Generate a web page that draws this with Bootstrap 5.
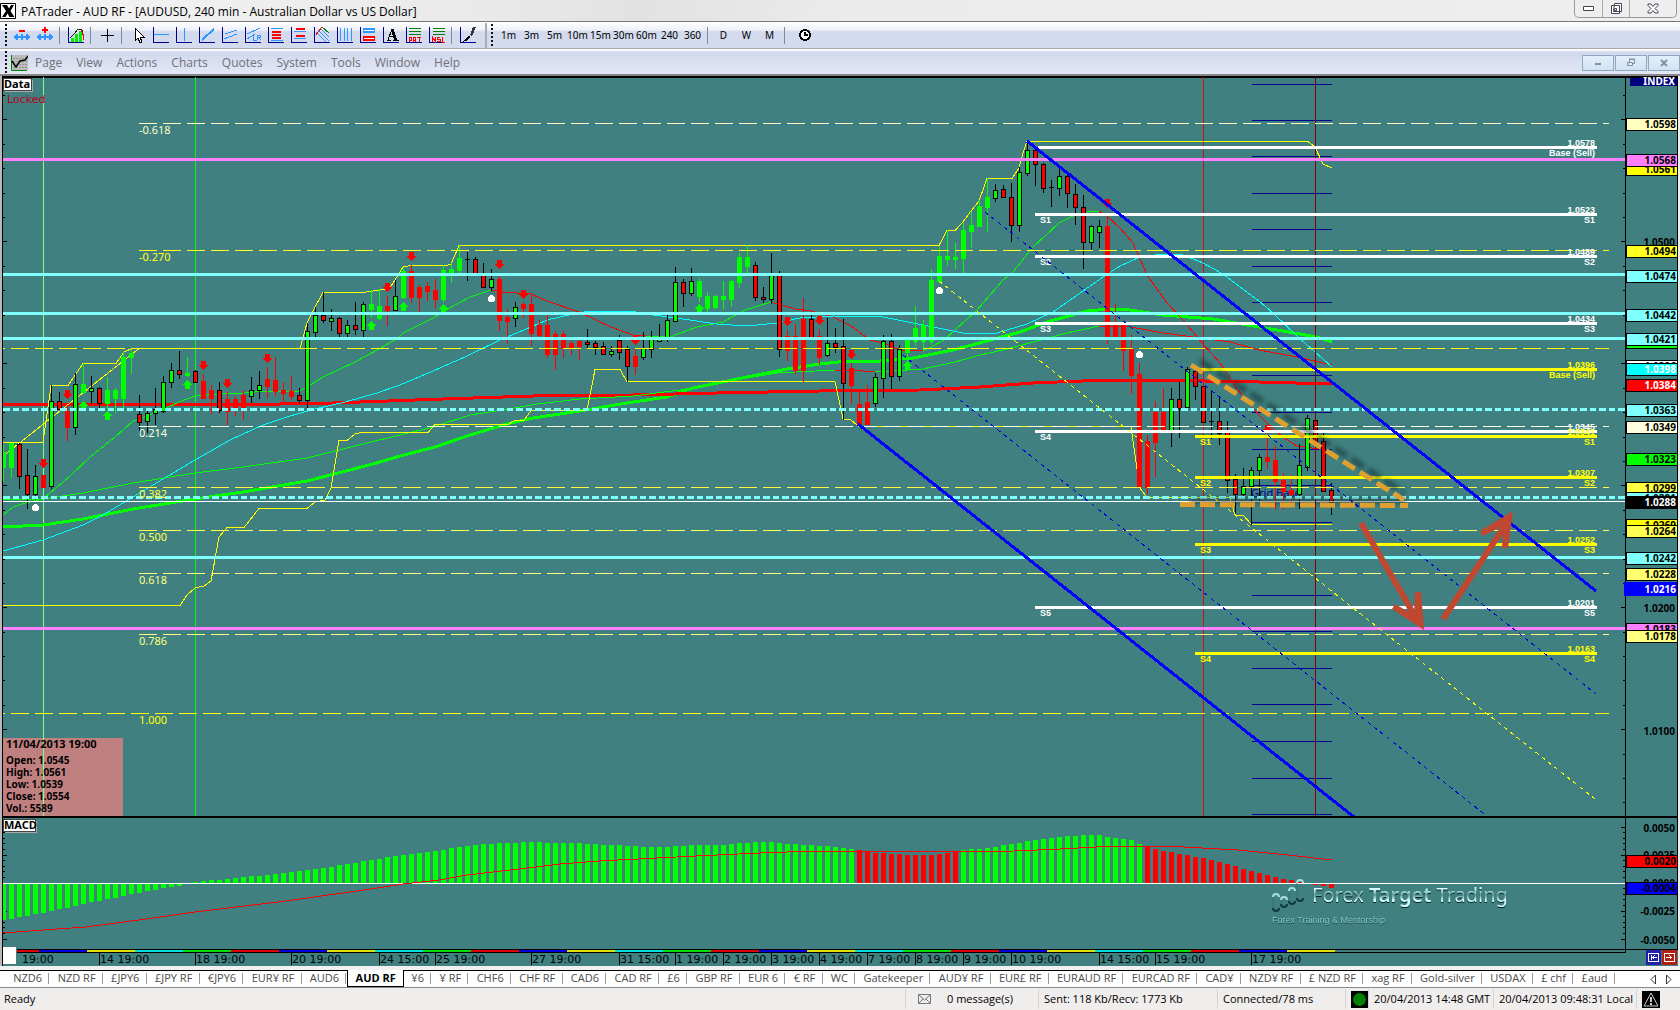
<!DOCTYPE html>
<html lang="en">
<head>
<meta charset="utf-8">
<meta name="viewport" content="width=device-width, initial-scale=1">
<title>PATrader - AUD RF</title>
<link href="https://cdn.jsdelivr.net/npm/bootstrap@5.3.0/dist/css/bootstrap.min.css" rel="stylesheet">
<style>
:root{--ui:"Open Sans","Noto Sans",sans-serif;--num:"Noto Sans","Open Sans",sans-serif;--wide:"DejaVu Sans",sans-serif}
body{font-family:var(--ui);font-size:11px;line-height:16px;color:#000;background:#f0eeee}
button{background:none;border:0;padding:0;color:inherit;font:inherit}
.title-strip{height:22px;background:linear-gradient(100deg,#f4f4f4,#e9e9e9 30%,#e2e2e2 38%,#ebebeb 50%,#eee);border-bottom:1px solid #777;font-size:12px}
.app-mark{margin:3px 5px 0 0}
.tool-strip{height:27px;background:linear-gradient(#fff,#eef1f9 30%,#d3daed 38%,#d4dbee);border-bottom:1px solid #aaa}
.menu-strip{height:27px;padding-top:2px;background:linear-gradient(#fff 1px,#d2d9ed 3px,#e3e7f6);border-bottom:2px solid #85858a;color:#707078;font-size:12px}
.grip{width:2px;height:23px;margin:0 3px 0 5px;background:repeating-linear-gradient(#111 0 2px,transparent 2px 4px)}
.tool{width:23px;height:23px;display:flex;align-items:center;justify-content:center}
.tool svg{width:18px;height:18px;shape-rendering:crispEdges}
.divide{width:8px;height:17px;background:linear-gradient(#84889a,#84889a) 3px 0/1px 100% no-repeat}
.bar-end{width:2px;height:25px;background:#aab;margin-left:6px}
.frames{font-family:var(--num);font-size:10px}
.menu-strip .entry{padding:0 7px}
.win-keys{height:18px;border:1px solid #999;border-top:0;border-radius:0 0 5px 5px;margin-right:3px}
.win-keys button{width:27px;height:17px;display:flex;align-items:center;justify-content:center}
.win-keys button+button{border-left:1px solid #aaa}
.win-keys button:last-child{width:47px}
.mdi{width:32px;height:16px;border:1px solid #8fa9bf;background:linear-gradient(#e3f0fb,#d2e2f2);display:flex;align-items:center;justify-content:center;margin-right:1px}
.chart{display:block;width:100%;height:auto}
.tab-strip{height:22px;background:#fff;border-top:4px solid #f1f1f1;box-shadow:inset 0 1px #000;border-bottom:1px solid #888;color:#4c4c4c}
.tab-list{max-width:1616px;padding-left:6px}
.sheet{flex:1 1 auto;height:16px;line-height:16px;white-space:nowrap;text-align:center;border-right:1px solid transparent;background:linear-gradient(#999,#999) right 3px/1px 11px no-repeat}
.sheet.current{font-weight:700;color:#000;border:1px solid #000;border-top:0;background:#fff;height:17px}
.state{height:22px;background:#f0eded;font-size:11px}
.cell{border-left:1px solid #d5d2d2;height:20px;line-height:20px;padding-left:5px;white-space:nowrap}
.c-msg{width:133px}.c-net{width:179px}.c-link{width:128px}.c-time{width:125px}.c-local{width:143px}.c-alert{padding-right:20px}
text{white-space:pre}
.t-fib{font:11px var(--num)}
.t-price{font:700 10px var(--num);text-anchor:end}
.t-lvl{font:700 9px "Liberation Sans",sans-serif}
.t-time{font:11px var(--wide)}
.t-info{font:700 10px var(--num)}
.t-head{font:700 11px var(--num)}
.t-mark{font:20px var(--num);fill:url(#steel);filter:drop-shadow(0 1px 0 #042426)}
.t-sub{font:9px "Liberation Sans",sans-serif;fill:#8ac4c4;filter:drop-shadow(0 1px 0 #174a4c)}
</style>
<script src="https://cdn.jsdelivr.net/npm/bootstrap@5.3.0/dist/js/bootstrap.bundle.min.js"></script>
</head>
<body class="m-0">
<header>
  <div class="title-strip d-flex align-items-start">
    <svg class="app-mark flex-shrink-0" width="16" height="16" viewBox="0 0 16 16"><path d="M.5.5h15v15H.5z" fill="#fff" stroke="#000"/><path d="M2 2h5l2 3.500 2-3.500h3l-3.500 6 4 6H9.500L7.500 10.500 5.500 14H2l4-6z" fill="#000"/></svg>
    <span class="mt-1 lh-sm">PATrader - AUD RF - [AUDUSD, 240 min - Australian Dollar vs US Dollar]</span>
    <div class="win-keys d-flex ms-auto">
      <button aria-label="Minimize"><svg width="13" height="6"><path d="M1.500.5h10v4h-10z" fill="#fff" stroke="#445"/></svg></button>
      <button aria-label="Restore"><svg width="13" height="13" fill="#fff" stroke="#445"><path d="M4.500 1.500h7v8h-8zM1.500 3.500h8v8h-8z"/><path d="M4.500 6.500h2v2h-2z"/></svg></button>
      <button aria-label="Close"><svg width="12" height="11"><path d="M1 1h3l2 2.500L8 1h3v1.500L8 5.500l3 3V10H8L6 7.500 4 10H1V8.500l3-3-3-3z" fill="#fff" stroke="#445"/></svg></button>
    </div>
  </div>
  <div class="tool-strip d-flex align-items-center">
    <span class="grip"></span>
    <div class="d-flex align-items-center" id="tools"></div>
    <span class="bar-end"></span><span class="grip ms-1 me-1"></span>
    <div class="frames d-flex align-items-center" id="frames"></div>
  </div>
  <nav class="menu-strip d-flex align-items-center">
    <span class="grip me-0"></span>
    <svg class="ms-1" width="17" height="16" viewBox="0 0 17 16"><path d="M1 0h16v15H1z" fill="#bbb"/><path d="M.5 0v15.500H16" stroke="#080" fill="none"/><path d="M3 3v12M6 3v12M9 3v12M12 3v12M15 3v12" stroke="#777" stroke-dasharray="1 2"/><path d="M1 6l4 6 4-6 5-1 3-4" stroke="#000" stroke-width="1.500" fill="none"/></svg>
    <button class="entry">Page</button><button class="entry">View</button><button class="entry">Actions</button><button class="entry">Charts</button><button class="entry">Quotes</button><button class="entry">System</button><button class="entry">Tools</button><button class="entry">Window</button><button class="entry">Help</button>
    <div class="d-flex ms-auto">
      <button class="mdi" aria-label="Minimize chart"><svg width="8" height="6"><path d="M1 3h6v2H1z" fill="#7d93a8"/></svg></button>
      <button class="mdi" aria-label="Restore chart"><svg width="10" height="9" fill="none" stroke="#7d93a8"><path d="M3.500 5V1.500h5v4H6M1.500 4.500h5v3h-5zM3 1h6"/></svg></button>
      <button class="mdi me-0" aria-label="Close chart"><svg width="8" height="8"><path d="M1 1l6 6M7 1L1 7" stroke="#7d93a8" stroke-width="2"/></svg></button>
    </div>
  </nav>
</header>
<main>
  <svg class="chart" id="chart" viewBox="0 76 1680 890" shape-rendering="crispEdges" role="img" aria-label="AUDUSD 240 minute chart">
    <defs>
      <linearGradient id="steel" x1="0" y1="0" x2="0" y2="1"><stop offset=".3" stop-color="#d4ffff"/><stop offset=".52" stop-color="#5c9a9a"/><stop offset=".7" stop-color="#d4ffff"/></linearGradient>
      <filter id="soft" x="-10%" y="-40%" width="120%" height="180%"><feGaussianBlur stdDeviation="2"/></filter>
      <clipPath id="pane"><path d="M3 77h1622v740H3z"/></clipPath>
    </defs>
  </svg>
</main>
<footer>
  <div class="tab-strip d-flex">
    <div class="tab-list d-flex flex-fill" id="tabs"></div>
    <div class="d-flex ms-auto align-items-center gap-2 px-2">
      <button aria-label="Previous" class="lh-1"><svg width="7" height="11"><path d="M5.500 1v9L1 5.500z" fill="#fff" stroke="#333"/></svg></button>
      <button aria-label="Next" class="lh-1"><svg width="7" height="11"><path d="M1.500 1v9L6 5.500z" fill="#fff" stroke="#333"/></svg></button>
    </div>
  </div>
  <div class="state d-flex align-items-center">
    <span class="ps-1 me-auto">Ready</span>
    <div class="cell c-msg d-flex align-items-center ps-2"><svg class="ms-1 me-3" width="13" height="10"><path d="M.5.5h12v9H.5z" fill="#eee" stroke="#777"/><path d="M1 1l5.500 5L12 1M1 9l4-4M12 9L8 5" fill="none" stroke="#777"/></svg><span>0 message(s)</span></div>
    <div class="cell c-net">Sent: 118 Kb/Recv: 1773 Kb</div>
    <div class="cell c-link">Connected/78 ms</div>
    <div class="cell d-flex align-items-center"><svg width="17" height="17"><path d="M0 0h17v17H0z"/><circle cx="8.500" cy="8.500" r="6.500" fill="#008000"/></svg></div>
    <div class="cell c-time">20/04/2013 14:48 GMT</div>
    <div class="cell c-local">20/04/2013 09:48:31 Local</div>
    <div class="cell c-alert d-flex align-items-center"><svg width="18" height="17"><path d="M0 0h18v17H0z"/><path d="M9 2l7 13H2z" fill="none" stroke="#ccc"/><path d="M9 6v5M9 12v2" stroke="#ccc" stroke-width="2"/></svg></div>
  </div>
</footer>
<script>
/* toolbar */
const axes='<path d="M1.500 1v15.500H17" fill="none" stroke="#00008b"/>';
const L=(d,c,w)=>`<path d="${d}" fill="none" stroke="${c}" stroke-width="${w||1}"/>`, B='#2e96ff';
const arrows='<path d="M3 8h2v2h3V8h2v2h3V8h2l2 3-2 3h-2v-2h-3v2H8v-2H5v2H3l-2-3z" fill="'+B+'"/>';
const tools=[
 ['Shrink',arrows+'<path d="M6 4h6v2H6z" fill="red"/>'],['Expand',arrows+'<path d="M8 1h2v2h2v2h-2v2H8V5H6V3h2z" fill="red"/>'],0,
 ['Chart',axes+'<path d="M4 12h3v4H4zM8 8h3v8H8zM12 5h3v11h-3z" fill="#0e0"/>'+L('M3 12l5-5 3-4 4 1 2 10','#222')+L('M14 4l2 4v6','red')],0,
 ['Crosshair',L('M9.500 3v13M3 9.500h13','#000')],0,
 ['Pointer','<path d="M6 2v13l3-3 2 5 2-1-2-5h4z" fill="#fff" stroke="#000"/>'],
 ['Horizontal line',axes+L('M2 8.500h15',B)],['Vertical line',axes+L('M9.500 2v13',B)],['Trend line',axes+L('M4 14L16 3',B,2)],
 ['Channel',axes+L('M4 8l12-4M3 13l13-5',B)],['Regression',axes+L('M3 8l13-6M3 13l8-5M9.500 9v5h3M13.500 14V9h3v2h-2l2 3',B)],
 ['Retracement',axes+L('M4 2.500h12M4 14.500h12',B)+L('M5 5.500h9M5 8.500h9M5 11.500h9','red',2)],['Extension',axes+L('M4 5.500h12M4 12.500h12',B)+L('M6 2.500h9M6 9.500h9','red',2)],
 ['Fan',axes+L('M3 6l10 10M5 4l11 11M7 2l9 9',B)+L('M9 1l7 6','green')+L('M3 9l6-8','red')],['Cycles',axes+L('M4.500 2v13M8.500 2v13M11.500 2v13M15.500 2v13',B)],
 ['Zones',axes+'<path d="M4 2h12v5H4z" fill="'+B+'"/><path d="M4 10h12v5H4z" fill="red"/>'+L('M5 4.500h10M5 12.500h10','#fff',1)],
 ['Text',axes+L('M5 14.500h4M11 14.500h6M6 14L10 3M7 10.500h5','#000',1)+L('M10 3l4 12','#000',3)],
 ['Pattern',axes+L('M4 2.500h12M4 5.500h12M4 8.500h12','green')+L('M4.500 16v-5h2v3H4M8.500 16v-5h2v5M8 14.500h2M12 11.500h4M14.500 11v5','red')],
 ['Levels',axes+L('M5 2.500h12M5 5.500h12M5 8.500h12','green')+L('M4.500 16v-5l3 5v-5M12 11.500H9.500v2h3v2H9M14.500 11v5h2','red')],0,
 ['Brush',axes+'<path d="M14 1h3l-4 9-2-1z" fill="#333"/><path d="M10 10l2 1-5 4-4 1z" fill="#000"/>']];
document.getElementById('tools').innerHTML=tools.map(t=>t?`<button class="tool" aria-label="${t[0]}"><svg viewBox="0 0 18 18">${t[1]}</svg></button>`:'<span class="divide"></span>').join('');
const clock='<button class="tool ms-1" aria-label="Clock"><svg viewBox="0 0 18 18" shape-rendering="geometricPrecision"><circle cx="9" cy="9" r="5" fill="#fff" stroke="#000" stroke-width="2"/><path d="M9 6v3h3" fill="none" stroke="#000" stroke-width="1.500"/></svg></button>';
document.getElementById('frames').innerHTML=['1m','3m','5m','10m','15m','30m','60m','240','360',0,'D','W','M',0].map(t=>t?`<button class="tool">${t}</button>`:'<span class="divide"></span>').join('')+clock;
const tabs='NZD6|NZD RF|£JPY6|£JPY RF|€JPY6|EUR¥ RF|AUD6|AUD RF|¥6|¥ RF|CHF6|CHF RF|CAD6|CAD RF|£6|GBP RF|EUR 6|€  RF|WC|Gatekeeper|AUD¥ RF|EUR£ RF|EURAUD RF|EURCAD RF|CAD¥|NZD¥ RF|£ NZD RF|xag RF|Gold-silver|USDAX|£ chf|£aud'.split('|');
document.getElementById('tabs').innerHTML=tabs.map(t=>`<button class="sheet${t==='AUD RF'?' current':''}">${t}</button>`).join('');

/* chart */
let out='';
const rect=(x,y,w,h,f,e='')=>out+=`<rect x="${x}" y="${y}" width="${w}" height="${h}" fill="${f}" ${e}/>`;
const line=(x1,y1,x2,y2,c,w=1,e='')=>out+=`<path d="M${x1} ${y1}L${x2} ${y2}" stroke="${c}" stroke-width="${w}" fill="none" ${e}/>`;
const poly=(p,c,w=1,e='')=>out+=`<polyline points="${p}" stroke="${c}" stroke-width="${w}" fill="none" ${e}/>`;
const text=(x,y,s,cls,c,e='')=>out+=`<text x="${x}" y="${y}" class="${cls}" fill="${c}" ${e}>${s}</text>`;
rect(0,76,1680,890,'#b9b9b9');rect(2,76,1676,890,'#408080');rect(1678,76,2,890,'#eee');
line(2,77,1678,77,'#000',2);line(2.5,76,2.5,966,'#000');line(1677.5,76,1677.5,950,'#000');line(1625.5,76,1625.5,953,'#000');
for(let i=0;i<30;i++){const y=Math.round(95.9+24.4*i)-.5,M=i%5===1;line(3,y,M?7:5,y,'#000');line(M?1621:1623,y,1625,y,'#000')}
for(let i=0;i<=20;i++){const y=Math.round(827.5+5.6*i)-.5,M=i%5===0;line(3,y,M?7:5,y,'#000');line(M?1621:1623,y,1625,y,'#000')}
rect(3,738,120,78,'#c08080');
out+='<g clip-path="url(#pane)">';
line(43.5,77,43.5,817,'#80ff80');line(195.5,77,195.5,817,'#0f0');line(1203.5,77,1203.5,817,'#d01010');
text(7,103,'Locked','t-time','#b80020');
['11/04/2013 19:00','Open: 1.0545','High: 1.0561','Low: 1.0539','Close: 1.0554','Vol.: 5589'].forEach((s,i)=>text(6,i?752+12*i:748,s,i?'t-info':'t-head','#000'));
[84,120,156,193,229,266,302,375,412,449,485,522,595,631,668,704,741,778,814].forEach(y=>line(1252,y+.5,1332,y+.5,'#000090'));
text(1251,497,'Grid Base','t-fib','#000090');
/* moving averages */
poly('3,527 43,525 83,519 133,509 195,499 243,492 307,481 373,464 400,456 435,447 467,436 507,424 533,418 580,411 633,402 667,397 693,388 747,377 787,369 820,364 847,361 880,361 913,358 953,350 987,341 1020,332 1047,322 1087,311 1110,309 1130,310 1163,315 1213,319 1259,327 1277,330 1317,337 1332,342','#0f0',3);
poly('3,404 280,404 333,403 443,399 533,396 633,395 717,393 820,391 920,390 980,387 1033,383 1107,380 1150,380 1259,382 1332,384','#f00',3);
poly('3,500 43,499 83,493 133,483 195,473 243,467 307,458 363,444 400,435 433,427 470,415 503,410 537,404 580,399 633,396 680,390 723,382 777,373 835,370','#0f0');
poly('835,370 851,370 875,372','#f00');poly('875,372 923,369 955,362 980,355 1003,350 1033,342 1067,333 1099,326','#0f0');poly('1099,326 1131,327 1163,333 1193,337 1230,342 1259,350 1297,357 1332,365','#f00');
poly('3,515 13,507 25,503 43,499 70,476 90,457 115,437 133,421 155,413 179,402 195,396 219,394 243,393 267,391 299,391 307,387 323,377 355,362 379,349 398,338 403,333 435,317 446,310 470,297 491,290','#0f0');
poly('491,290 503,292 531,294 547,301 579,312 611,327 633,335 646,336','#f00');poly('646,336 670,337 697,327 723,322 745,310 755,307 771,302','#0f0');
poly('771,302 795,309 811,311 833,317 851,326 870,340 883,343 900,350 923,351','#f00');
poly('923,351 931,347 944,340 977,310 1003,280 1013,272 1033,247 1059,223 1075,215 1088,212 1099,211','#0f0');
poly('1099,211 1107,216 1120,228 1133,243 1147,275 1167,303 1183,320 1203,344 1220,363 1237,389 1259,415 1267,423 1283,437 1297,446 1320,449 1332,457','#f00');
poly('3,551 43,540 83,525 103,515 133,497 163,479 195,460 230,440 263,425 290,416 315,409 345,402 377,393 400,385 433,371 467,356 500,340 531,327 547,320 573,314 590,311 630,311 653,315 683,319 717,324 747,326 777,323 800,318 833,316 883,317 923,325 963,333 997,333 1027,324 1053,312 1083,291 1103,277 1120,266 1140,257 1163,254 1183,255 1203,263 1223,274 1259,301 1273,313 1297,336 1332,367','#0ff');
/* range channel */
poly('3,442.500 43,442.500 51,385.500 68,385.500 83,363.500 116,363.500 124,352 132,348.500 300,348.500 307,323 315,307 323,292.500 363,292.500 379,290 389,289 395,280 403,267 411,265.500 447,265.500 451,264 459,245.500 939,245.500 947,230.500 955,230.500 963,222 971,211 979,201 987,178.500 1012,178.500 1019,168 1023,153 1027,141.500 1308,141.500 1315,147 1323,164 1332,168','#ff0');
poly('3,456 139,348.500','#ff0');
poly('3,605.500 180,605.500 187,595 195,588 204,586 211,581 219,537 227,527.500 244,527.500 259,508.500 307,508.500 315,502 325,500 331,488 339,440.500 347,440.500 355,434 361,432.500 428,432.500 435,424.500 508,424.500 515,420.500 524,420.500 531,410.500 587,410.500 595,369.500 620,369.500 627,381.500 835,381.500 843,419 851,420 859,426.500 1131,426.500 1137,469 1139,487 1147,497.500 1230,498 1235,515 1243,515 1251,524','#ff0');
line(1251,524.5,1332,524.5,'#ff0');
/* candles: kind high low top bottom, one step per 8px; capitals are outlined */
const C=`g445 481 452 467;g443 477 443 467;R443 488 444 476;R449 508 475 494;G465 499 476 494;r475 487 475 487;G385 488 401 486;R392 409 401 409;r405 440 411 427;G373 434 384 427;g363 393 384 392;G376 403 388 391;R387 408 388 403;g377 409 390 403;g388 412 390 398;g352 408 357 398;g348 373 353 357;R395 433 414 422;G411 432 413 421;G388 424 409 413;G376 412 382 411;G363 387 370 382;R351 378 370 374;g357 376 373 375;R370 382 371 382;r374 398 381 398;r385 413 390 398;R382 412 390 410;r392 424 399 411;r396 415 399 408;r390 419 395 408;G377 402 390 396;G371 398 385 390;r367 397 379 386;r357 395 380 391;r382 401 390 393;r376 399 391 396;R388 403 395 400;G323 408 331 400;G307 336 315 332;R292 322 315 320;G309 330 318 321;R317 337 318 333;G320 337 325 333;R302 334 325 329;G302 337 304 330;g290 317 304 309;g289 319 306 318;r296 325 306 310;G280 310 296 310;g267 298 271 297;r265 302 271 297;r285 312 287 297;r282 300 286 291;r279 307 290 299;g265 301 270 299;g263 282 269 272;g245 274 258 270;G252 280 259 260;R257 274 259 274;R263 287 275 287;G269 290 279 287;r276 330 279 320;r309 343 317 321;G302 326 307 318;r302 317 304 308;r293 345 304 333;r320 339 325 335;r315 357 325 354;r331 369 334 354;r331 357 334 348;r341 354 343 348;r339 359 341 346;R329 348 342 344;R341 354 343 347;R342 354 346 354;G346 356 351 354;R335 359 340 352;R346 381 349 366;r349 374 356 366;G332 359 348 357;G331 357 339 349;G324 341 339 341;G315 341 320 338;G267 321 282 321;R279 306 282 293;G268 295 281 293;g278 301 281 296;g292 312 296 308;g295 308 296 307;g281 308 296 299;g280 306 281 299;g253 287 257 282;g245 273 257 266;R262 300 265 297;R287 302 297 299;G253 303 275 299;R271 356 275 349;r330 360 336 350;r324 373 336 370;r298 381 319 370;R312 337 319 337;r329 364 336 357;G318 356 343 355;R328 352 343 347;R319 419 346 383;r363 403 368 385;r392 425 404 425;r385 424 402 424;G373 406 377 403;G335 397 341 378;R334 388 341 376;G345 380 349 376;g337 360 340 352;g306 345 328 341;g320 350 325 341;g269 344 280 341;g247 282 256 281;g230 265 256 259;g243 268 257 259;g222 273 230 258;g211 247 225 231;g200 226 206 226;g178 231 197 207;G184 201 190 198;R185 197 189 197;R183 241 197 225;G167 231 172 225;G142 175 150 173;R148 185 150 164;R163 192 164 188;R180 206 187 188;G169 195 176 188;R175 207 176 193;R184 224 194 207;R195 268 207 242;G225 250 226 242;G220 247 226 232;r213 343 226 337;r304 337 325 337;r321 370 325 350;r335 393 349 375;r363 487 374 487;r435 493 441 487;r401 476 412 442;r388 431 412 431;G388 446 399 431;R382 437 399 408;G367 408 369 407;R369 399 371 386;R386 422 386 422;R391 438 421 422;R398 444 421 433;R421 492 432 480;R474 515 479 494;G468 496 486 494;G467 524 470 486;G454 501 457 470;r438 468 457 461;r446 509 460 481;r473 509 480 491;r475 502 490 494;G444 508 465 494;G415 470 418 467;R420 442 420 442;R432 491 441 491;R483 514 490 502`.split(';');
C.forEach((s,i)=>{const k=s[0],[h,l,t,b]=s.slice(1).split(' ').map(Number),x=3+8*i,f=/g/i.test(k)?'#0f0':'#f00',edge=k<'a';
 line(x+.5,h,x+.5,l+1,edge?'#000':f);
 if(b-t<2)line(x-2,t+.5,x+3,t+.5,edge?'#000':f);
 else if(edge)rect(x-1.5,t+.5,4,b-t,f,'stroke="#000"');
 else rect(x-2,t,5,b-t+1,f)});
const at=i=>3.5+8*i;
[[5,463],[8,394],[25,365],[28,383],[33,358],[48,287],[51,256],[62,264],[65,294],[79,340],[98,321],[102,320],[106,354],[138,203],[158,429]].forEach(([i,y])=>out+=`<path d="M${at(i)-2.5} ${y-4}h5v4h3l-5.500 5-5.500-5h3z" fill="#f00"/>`);
[[10,406],[13,416],[23,385],[46,326],[50,307],[55,309],[87,309],[113,366]].forEach(([i,y])=>out+=`<path d="M${at(i)-2.5} ${y+4}h5v-4h3l-5.500-5-5.500 5h3z" fill="#0f0"/>`);
[[4,507],[61,298],[117,290],[142,354]].forEach(([i,y])=>out+=`<circle cx="${at(i)}" cy="${y+.5}" r="3.500" fill="#fff"/>`);
/* levels */
line(3,501.5,1625,501.5,'#fff');
line(1315.5,77,1315.5,817,'#800000');
[147,214,256,323,431,607].forEach((y,i)=>line(i?1035:1038,y+.5,1597,y+.5,'#fff',3));
[369,436,477,544,653].forEach((y,i)=>line(i?1195:1198,y+.5,1597,y+.5,'#ff0',3));
[159,628].forEach(y=>line(3,y+.5,1625,y+.5,'#ff80ff',3));
[274,313,338,557].forEach(y=>line(3,y+.5,1625,y+.5,'#80ffff',3));
[409,497].forEach(y=>line(3,y+.5,1625,y+.5,'#80ffff',3,'stroke-dasharray="7 3 6 3"'));
[[123,'#ffffc0','-0.618'],[250,'#ffff20','-0.270'],[348,'#ff0',''],[426,'#ffffe0','0.214'],[487,'#ffff40','0.382'],[530,'#ffff50','0.500'],[573,'#ffff80','0.618'],[634,'#ffff80','0.786'],[713,'#ff0','1.000']].forEach(([y,c,s])=>{
 const x=y===348||y===713?-13:139;line(x,y+.5,1609,y+.5,c,1,'stroke-dasharray="18 6"');if(s)text(139,y+11,s,'t-fib',c)});
[[147,'1.0578','Base (Sell)'],[214,'1.0523','S1'],[256,'1.0489','S2'],[323,'1.0434','S3'],[431,'1.0345',''],[607,'1.0201','S5']].forEach(([y,a,b],i)=>{text(1595,y-1,a,'t-lvl','#fff','text-anchor="end"');if(b)text(1595,y+9,b,'t-lvl','#fff','text-anchor="end"');if(i)text(1040,y+9,'S'+i,'t-lvl','#fff')});
[[369,'1.0396','Base (Sell)'],[436,'1.0341','S1'],[477,'1.0307','S2'],[544,'1.0252','S3'],[653,'1.0163','S4']].forEach(([y,a,b],i)=>{text(1595,y-1,a,'t-lvl','#ff0','text-anchor="end"');text(1595,y+9,b,'t-lvl','#ff0','text-anchor="end"');if(i)text(1200,y+9,'S'+i,'t-lvl','#ff0')});
/* trend lines */
line(1027,141,1596,591,'#00f',3);line(858,424,1354,817,'#00f',3);
line(985,212,1596,694,'#0000d8',1,'stroke-dasharray="4 4"');line(903,355,1488,817,'#0000d8',1,'stroke-dasharray="4 4"');line(939,281,1595,799,'#ff0',1,'stroke-dasharray="4 4"');
out+='<g shape-rendering="geometricPrecision"><g filter="url(#soft)" opacity=".5">';
poly('1200,361 1404,493','#102020',6,'stroke-dasharray="15 5"');rect(1190,498,215,5,'#102020');
out+='</g>';
poly('1191,365 1404,500','#e0a030',5,'stroke-dasharray="14 6"');line(1180,504.5,1408,505.5,'#e0a030',5,'stroke-dasharray="15 5"');
poly('1361,523 1420,625','#c04830',6);out+='<path d="M1392 609L1395 604L1414 615L1415 592L1421 592L1424 630Z" fill="#c04830"/>';
poly('1443,619 1510,518','#c04830',6);out+='<path d="M1480 531L1483 536L1503 526L1502 548L1508 548L1513 511Z" fill="#c04830"/>';
out+='</g></g>';
/* caption plates */
const plate=(y,w,s)=>{rect(5,y+2,w,12,'#b0a8a8');rect(3,y,w,12,'#fff','stroke="#444"');text(4,y+10,s,'t-head','#000')};
plate(78,28,'Data');
/* MACD */
line(2,817,1678,817,'#000',2);
const K=[[0,-36],[5,-29],[10,-20],[14,-14],[18,-7],[21,-3],[22,-2],[23,0],[24,1],[28,4],[35,10],[40,15],[46,23],[50,28],[54,32],[58,37],[62,40],[67,41],[68,40],[71,40],[76,38],[81,36],[83,36],[86,38],[90,38],[92,40],[96,41],[98,39],[101,38],[104,36],[106,34],[107,33],[109,30],[113,28],[116,28],[118,30],[119,32],[123,35],[126,39],[130,44],[133,47],[137,48],[138,46],[140,44],[141,43],[142,39],[143,36],[145,32],[147,29],[150,25],[153,19],[156,12],[158,8],[160,4],[162,1],[163,0],[164,-1],[165,-2],[166,-4]];
for(let i=0,k=0;i<167;i++){while(K[k+1]&&K[k+1][0]<=i)k++;const a=K[k],b=K[k+1]||a,v=Math.round(a[1]+(b[0]>a[0]?(b[1]-a[1])*(i-a[0])/(b[0]-a[0]):0));
 const x=Math.max(3,1+8*i);if(v)rect(x,v>0?883-v:884,i?5:3,Math.abs(v),(i>106&&i<120)||i>142?'#f00':'#0f0')}
line(3,883.5,1625,883.5,'#fff');
poly('3,933 43,930 86,927 139,920 195,912 286,901 371,889 403,884 439,880 467,875 536,867 560,864 599,861 696,856 760,853 815,851 887,851 950,852 1014,851 1060,849 1096,847 1120,846 1166,846 1238,850 1288,855 1332,860','#f00');
plate(819,32,'MACD');
text(1312,902,'Forex <tspan font-weight="600">Target</tspan> Trading','t-mark','');text(1272,923,'Forex Training &amp; Mentorship','t-sub','');
out+='<g shape-rendering="auto" fill="none" stroke-width="2">'+[[1273,894,908],[1281,897,904],[1289,888,901],[1297,880,898]].map(([x,a,b])=>`<path d="M${x} ${a+3}q0-3 3-3t3 3" stroke="#a8dede"/><path d="M${x} ${b}q0 3 3 3t3-3" stroke="#0c3c3e"/><path d="M${x} ${a+3}V${b}" stroke="#357072" stroke-width="1"/>`).join('')+'</g>';
/* time axis */
line(17,949.5,1678,949.5,'#000');line(17,952.5,1625,952.5,'#000');
const day=['#0000e0','#e0e000','#00e0e0','#00e000','#e00000'];rect(17,950,22,2,'#e00000');
for(let i=0,x=39;x<1335;i++,x+=48)rect(x,950,Math.min(48,1336-x),2,day[i%5]);
rect(3,947,13,17,'#fff');
text(22,963,'19:00','t-time','#000');
[[99,'14 19:00'],[195,'18 19:00'],[291,'20 19:00'],[379,'24 15:00'],[435,'25 19:00'],[531,'27 19:00'],[619,'31 15:00'],[675,'1 19:00'],[723,'2 19:00'],[771,'3 19:00'],[819,'4 19:00'],[867,'7 19:00'],[915,'8 19:00'],[963,'9 19:00'],[1011,'10 19:00'],[1099,'14 15:00'],[1155,'15 19:00'],[1251,'17 19:00']].forEach(([x,s])=>{line(x+.5,953,x+.5,965,'#000');text(x+1,963,s,'t-time','#000')});
rect(1646,950,15,15,'#2020a8');rect(1662,950,15,15,'#b02010');
out+='<g fill="none" stroke="#fff"><path d="M1648.500 953.500h10v8h-10zM1651.500 955v5M1657 957.500h-5M1654.500 955.500l-2 2 2 2M1664.500 953.500h10v8h-10zM1666 957.500h6M1669.500 955.500l2 2-2 2"/></g>';
/* price axis: plain marks, then tags from back to front */
[['1.0500',242],['1.0200',608],['1.0100',731],['0.0050',828],['0.0025',855],['0.0000',883],['-0.0025',911],['-0.0050',940]].forEach(([s,y])=>text(1675,y+4,s,'t-price','#000'));
const tag=(s,y,f,c='#000',h=11)=>{rect(1626,y-6,51,h+1,f,'stroke="#000"');text(1676,y+4,s,'t-price',c)};
rect(1630,78,47,8,'#000080');text(1675,85,'INDEX','t-price','#fff');
[['1.0598',124,'#ffffc0'],['1.0561',169,'#ff0'],['1.0568',160,'#ff80ff'],['1.0494',251,'#ffff20'],['1.0474',276,'#80ffff'],['1.0442',315,'#80ffff'],['1.0420',342,'#0f0'],['1.0421',339,'#80ffff'],['1.0396',366,'#fff'],['1.0398',369,'#0ff','#fff'],['1.0384',385,'#f00','#fff'],['1.0363',410,'#80ffff'],['1.0349',427,'#ffffe0'],['1.0323',459,'#0f0'],['1.0299',488,'#ffff40'],['1.0291',498,'#80ffff'],['1.0288',502,'#000','#fff'],['1.0269',525,'#ff0'],['1.0264',531,'#ffff50'],['1.0242',558,'#80ffff'],['1.0228',574,'#ffff70'],['1.0183',629,'#ff80ff'],['1.0178',636,'#ffff80'],['0.0020',861,'#f00'],['-0.0004',888,'#00f']].forEach(a=>tag(...a));
rect(1624,582,53,14,'#00f');text(1676,593,'1.0216','t-price','#fff');
document.getElementById('chart').insertAdjacentHTML('beforeend',out);
</script>
</body>
</html>
